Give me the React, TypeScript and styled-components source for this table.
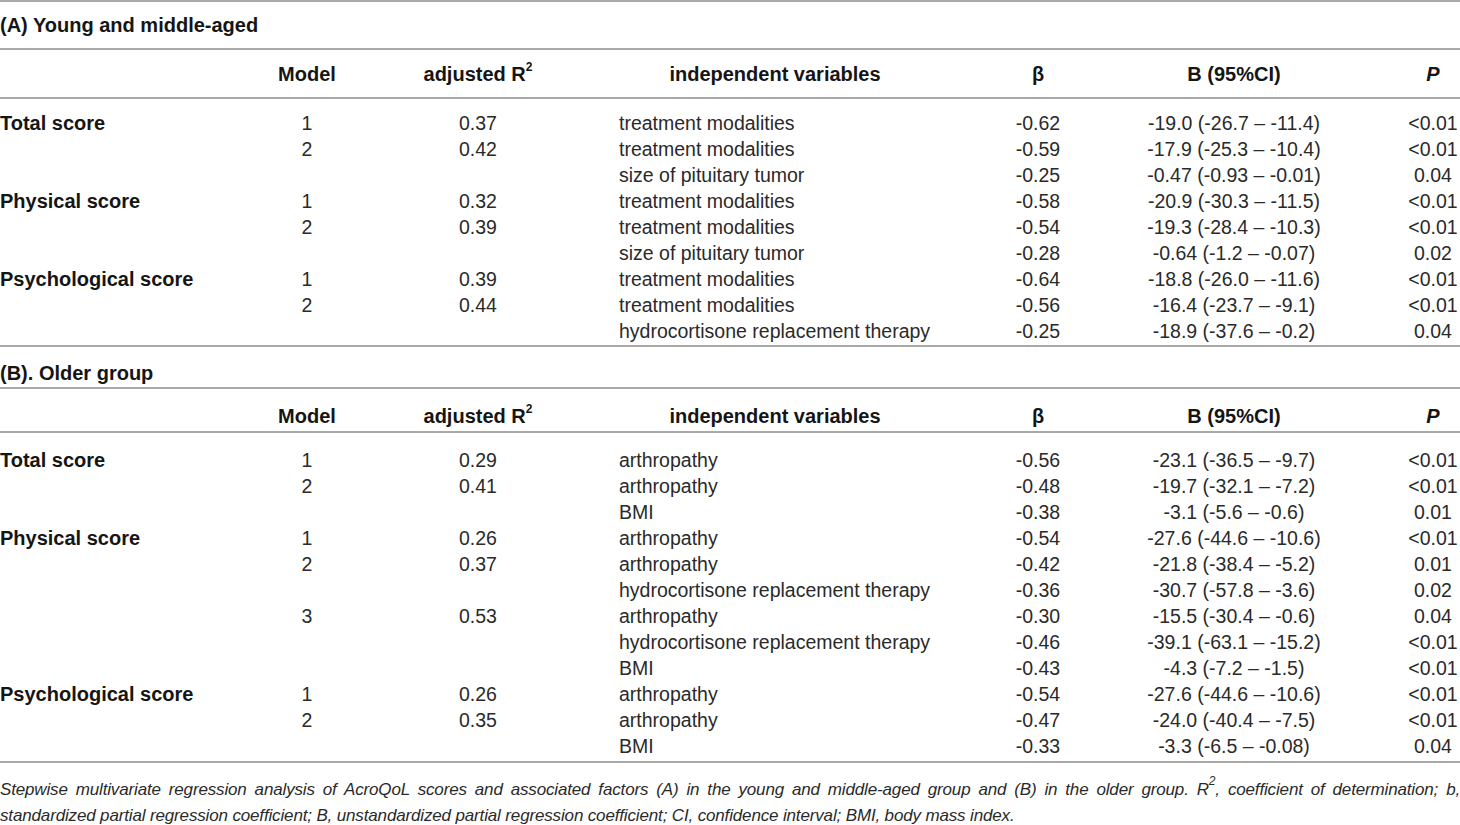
import React from "react";
import styled, { createGlobalStyle } from "styled-components";

const Global = createGlobalStyle`
  html, body { margin: 0; padding: 0; background: #fff; }
  body { font-family: "Liberation Sans", Arial, Helvetica, sans-serif; }
`;

const LINE = "#a9a9a9";
const COLS = "250px 114px 228px 366px 160px 232px 110px";

const Page = styled.div`
  width: 1460px;
  border-top: 2px solid ${LINE};
`;

const TitleBar = styled.div<{ $h: number; $pt: number }>`
  height: ${(p) => p.$h}px;
  box-sizing: border-box;
  padding-top: ${(p) => p.$pt}px;
  border-bottom: 2px solid ${LINE};
  font-size: 20px;
  font-weight: 700;
  line-height: 22px;
  color: #151515;
`;

const HeaderRow = styled.div<{ $h: number; $pt: number }>`
  display: grid;
  grid-template-columns: ${COLS};
  height: ${(p) => p.$h}px;
  box-sizing: border-box;
  padding-top: ${(p) => p.$pt}px;
  border-bottom: 2px solid ${LINE};
  font-size: 20px;
  font-weight: 700;
  line-height: 22px;
  color: #151515;
`;

const Body = styled.div<{ $pt: number; $h: number }>`
  height: ${(p) => p.$h}px;
  box-sizing: border-box;
  padding-top: ${(p) => p.$pt}px;
  border-bottom: 2px solid ${LINE};
`;

const DataRow = styled.div`
  display: grid;
  grid-template-columns: ${COLS};
  height: 26px;
  align-items: center;
  font-size: 19.5px;
  line-height: 22px;
  color: #2a2a2a;
`;

const Cell = styled.div<{ $align?: "left" | "center"; $pl?: number }>`
  text-align: ${(p) => p.$align ?? "center"};
  padding-left: ${(p) => p.$pl ?? 0}px;
  white-space: nowrap;
`;

const Label = styled.div`
  font-size: 20px;
  font-weight: 700;
  color: #151515;
  white-space: nowrap;
`;

const Sup = styled.sup`
  font-size: 12px;
  line-height: 0;
  vertical-align: 10px;
`;

const ItalicP = styled.span`
  font-style: italic;
`;

const Caption = styled.div`
  padding-top: 14px;
  width: 1460px;
  font-size: 17px;
  line-height: 26px;
  font-style: italic;
  color: #2a2a2a;
  letter-spacing: -0.15px;
`;

const CaptionLine = styled.div<{ $justify?: boolean }>`
  height: 26px;
  white-space: nowrap;
  text-align: ${(p) => (p.$justify ? "justify" : "left")};
  text-align-last: ${(p) => (p.$justify ? "justify" : "left")};
`;

type Row = [string, string, string, string, string, string, string];

const rowsA: Row[] = [
  ["Total score", "1", "0.37", "treatment modalities", "-0.62", "-19.0 (-26.7 – -11.4)", "<0.01"],
  ["", "2", "0.42", "treatment modalities", "-0.59", "-17.9 (-25.3 – -10.4)", "<0.01"],
  ["", "", "", "size of pituitary tumor", "-0.25", "-0.47 (-0.93 – -0.01)", "0.04"],
  ["Physical score", "1", "0.32", "treatment modalities", "-0.58", "-20.9 (-30.3 – -11.5)", "<0.01"],
  ["", "2", "0.39", "treatment modalities", "-0.54", "-19.3 (-28.4 – -10.3)", "<0.01"],
  ["", "", "", "size of pituitary tumor", "-0.28", "-0.64 (-1.2 – -0.07)", "0.02"],
  ["Psychological score", "1", "0.39", "treatment modalities", "-0.64", "-18.8 (-26.0 – -11.6)", "<0.01"],
  ["", "2", "0.44", "treatment modalities", "-0.56", "-16.4 (-23.7 – -9.1)", "<0.01"],
  ["", "", "", "hydrocortisone replacement therapy", "-0.25", "-18.9 (-37.6 – -0.2)", "0.04"],
];

const rowsB: Row[] = [
  ["Total score", "1", "0.29", "arthropathy", "-0.56", "-23.1 (-36.5 – -9.7)", "<0.01"],
  ["", "2", "0.41", "arthropathy", "-0.48", "-19.7 (-32.1 – -7.2)", "<0.01"],
  ["", "", "", "BMI", "-0.38", "-3.1 (-5.6 – -0.6)", "0.01"],
  ["Physical score", "1", "0.26", "arthropathy", "-0.54", "-27.6 (-44.6 – -10.6)", "<0.01"],
  ["", "2", "0.37", "arthropathy", "-0.42", "-21.8 (-38.4 – -5.2)", "0.01"],
  ["", "", "", "hydrocortisone replacement therapy", "-0.36", "-30.7 (-57.8 – -3.6)", "0.02"],
  ["", "3", "0.53", "arthropathy", "-0.30", "-15.5 (-30.4 – -0.6)", "0.04"],
  ["", "", "", "hydrocortisone replacement therapy", "-0.46", "-39.1 (-63.1 – -15.2)", "<0.01"],
  ["", "", "", "BMI", "-0.43", "-4.3 (-7.2 – -1.5)", "<0.01"],
  ["Psychological score", "1", "0.26", "arthropathy", "-0.54", "-27.6 (-44.6 – -10.6)", "<0.01"],
  ["", "2", "0.35", "arthropathy", "-0.47", "-24.0 (-40.4 – -7.5)", "<0.01"],
  ["", "", "", "BMI", "-0.33", "-3.3 (-6.5 – -0.08)", "0.04"],
];

const Header: React.FC<{ h: number; pt: number }> = ({ h, pt }) => (
  <HeaderRow $h={h} $pt={pt}>
    <Cell />
    <Cell>Model</Cell>
    <Cell>
      adjusted R<Sup>2</Sup>
    </Cell>
    <Cell>independent variables</Cell>
    <Cell>β</Cell>
    <Cell>B (95%CI)</Cell>
    <Cell $pl={56}>
      <ItalicP>P</ItalicP>
    </Cell>
  </HeaderRow>
);

const Rows: React.FC<{ rows: Row[] }> = ({ rows }) => (
  <>
    {rows.map((r, i) => (
      <DataRow key={i}>
        <Label>{r[0]}</Label>
        <Cell>{r[1]}</Cell>
        <Cell>{r[2]}</Cell>
        <Cell $align="left" $pl={27}>
          {r[3]}
        </Cell>
        <Cell>{r[4]}</Cell>
        <Cell>{r[5]}</Cell>
        <Cell $pl={56}>{r[6]}</Cell>
      </DataRow>
    ))}
  </>
);

export default function App() {
  return (
    <>
      <Global />
      <Page>
        <TitleBar $h={48} $pt={12}>(A) Young and middle-aged</TitleBar>
        <Header h={49} pt={13} />
        <Body $h={248} $pt={11}>
          <Rows rows={rowsA} />
        </Body>
        <TitleBar $h={42} $pt={15}>(B). Older group</TitleBar>
        <Header h={44} pt={16} />
        <Body $h={330} $pt={14}>
          <Rows rows={rowsB} />
        </Body>
        <Caption>
          <CaptionLine $justify>
            Stepwise multivariate regression analysis of AcroQoL scores and associated factors (A) in the young and
            middle-aged group and (B) in the older group. R<Sup>2</Sup>, coefficient of determination; b,
          </CaptionLine>
          <CaptionLine>
            standardized partial regression coefficient; B, unstandardized partial regression coefficient; CI,
            confidence interval; BMI, body mass index.
          </CaptionLine>
        </Caption>
      </Page>
    </>
  );
}
